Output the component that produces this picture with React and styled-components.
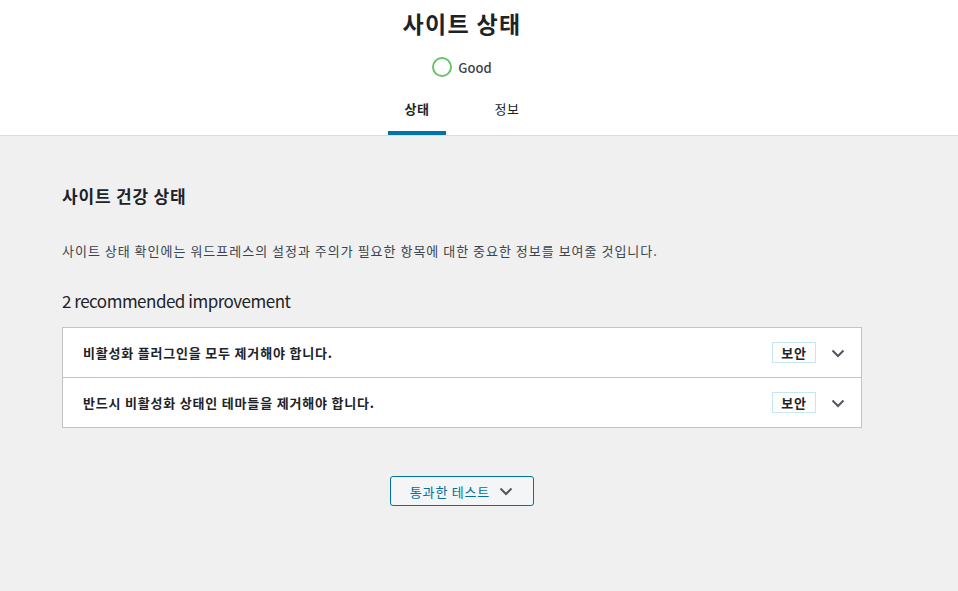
import React, { useState } from 'react'
import styled, { createGlobalStyle } from 'styled-components'

const GlobalStyle = createGlobalStyle`
  html, body {
    margin: 0;
    padding: 0;
    background: #f0f0f1;
    font-family: "Noto Sans CJK KR", "Noto Sans", "Liberation Sans", sans-serif;
    color: #1d2327;
  }
  * { box-sizing: border-box; }
`

const Page = styled.div`
  min-height: 591px;
  background: #f0f0f1;
`

const Header = styled.header`
  background: #fff;
  border-bottom: 1px solid #dcdcde;
  padding-top: 8px;
`

const HeaderInner = styled.div`
  width: 924px;
  display: flex;
  flex-direction: column;
  align-items: center;
`

const Title = styled.h1`
  margin: 0;
  font-size: 23px;
  line-height: 30px;
  font-weight: 700;
  letter-spacing: 1.3px;
  color: #1d2327;
`

const Status = styled.div`
  margin-top: 19px;
  display: flex;
  align-items: center;
  gap: 6px;
  height: 20px;
  font-size: 13px;
  font-weight: 500;
  color: #3c434a;
`

const Ring = styled.span`
  width: 20px;
  height: 20px;
  border-radius: 50%;
  border: 2px solid #68c26a;
`

const Tabs = styled.nav`
  margin-top: 14px;
  display: grid;
  grid-template-columns: 90px 90px;
`

const Tab = styled.button`
  margin: 0 16px;
  padding: 8px 0 12px;
  border: none;
  background: none;
  font-family: inherit;
  font-size: 13px;
  line-height: 20px;
  letter-spacing: 0.6px;
  font-weight: ${p => (p.$active ? 600 : 400)};
  color: #1d2327;
  border-bottom: 4px solid ${p => (p.$active ? '#0073aa' : 'transparent')};
  cursor: pointer;
`

const Body = styled.main`
  width: 800px;
  margin-left: 62px;
  padding-top: 47px;
`

const SectionTitle = styled.h2`
  margin: 0;
  font-size: 17px;
  line-height: 26px;
  font-weight: 700;
  letter-spacing: 0.8px;
  color: #1d2327;
`

const Description = styled.p`
  margin: 32px 0 0;
  font-size: 13px;
  line-height: 20px;
  letter-spacing: 1px;
  color: #3c434a;
`

const Count = styled.h3`
  margin: 27px 0 0;
  font-size: 17px;
  line-height: 26px;
  font-weight: 400;
  letter-spacing: -0.5px;
  color: #1d2327;
`

const Accordion = styled.div`
  margin-top: 13px;
  background: #fff;
  border: 1px solid #c3c4c7;
`

const Row = styled.div`
  height: ${p => (p.$last ? '49px' : '50px')};
  display: flex;
  align-items: center;
  padding: 0 15px 0 20px;
  border-bottom: ${p => (p.$last ? 'none' : '1px solid #c3c4c7')};
  font-size: 13px;
  font-weight: 600;
  color: #1d2327;
`

const RowTitle = styled.span`
  flex: 1;
  letter-spacing: 0.8px;
`

const Badge = styled.span`
  width: 44px;
  height: 21px;
  display: flex;
  align-items: center;
  justify-content: center;
  border: 1px solid #c5e6f3;
  font-size: 13px;
  font-weight: 600;
  letter-spacing: 0.8px;
  color: #1d2327;
  margin-right: 14px;
`

const Chevron = styled.svg`
  width: 16px;
  height: 16px;
  display: block;
`

const Center = styled.div`
  display: flex;
  justify-content: center;
  margin-top: 48px;
`

const PassedButton = styled.button`
  width: 144px;
  height: 30px;
  display: flex;
  align-items: center;
  justify-content: center;
  gap: 8px;
  border: 1px solid #0071a1;
  border-radius: 3px;
  background: #f3f5f6;
  color: #0071a1;
  font-family: inherit;
  font-size: 13px;
  letter-spacing: 0.8px;
  cursor: pointer;
`

const Arrow = ({ color = '#50575e' }) => (
  <Chevron viewBox="0 0 16 16" fill="none">
    <path d="M2.5 5.5 L8 11 L13.5 5.5" stroke={color} strokeWidth="2" />
  </Chevron>
)

const issues = [
  '비활성화 플러그인을 모두 제거해야 합니다.',
  '반드시 비활성화 상태인 테마들을 제거해야 합니다.',
]

export default function App() {
  const [tab, setTab] = useState(0)
  return (
    <Page>
      <GlobalStyle />
      <Header>
        <HeaderInner>
          <Title>사이트 상태</Title>
          <Status>
            <Ring />
            Good
          </Status>
          <Tabs>
            <Tab $active={tab === 0} onClick={() => setTab(0)}>상태</Tab>
            <Tab $active={tab === 1} onClick={() => setTab(1)}>정보</Tab>
          </Tabs>
        </HeaderInner>
      </Header>
      <Body>
        <SectionTitle>사이트 건강 상태</SectionTitle>
        <Description>
          사이트 상태 확인에는 워드프레스의 설정과 주의가 필요한 항목에 대한 중요한 정보를 보여줄 것입니다.
        </Description>
        <Count>2 recommended improvement</Count>
        <Accordion>
          {issues.map((text, i) => (
            <Row key={i} $last={i === issues.length - 1}>
              <RowTitle>{text}</RowTitle>
              <Badge>보안</Badge>
              <Arrow />
            </Row>
          ))}
        </Accordion>
        <Center>
          <PassedButton>
            통과한 테스트
            <Arrow />
          </PassedButton>
        </Center>
      </Body>
    </Page>
  )
}
